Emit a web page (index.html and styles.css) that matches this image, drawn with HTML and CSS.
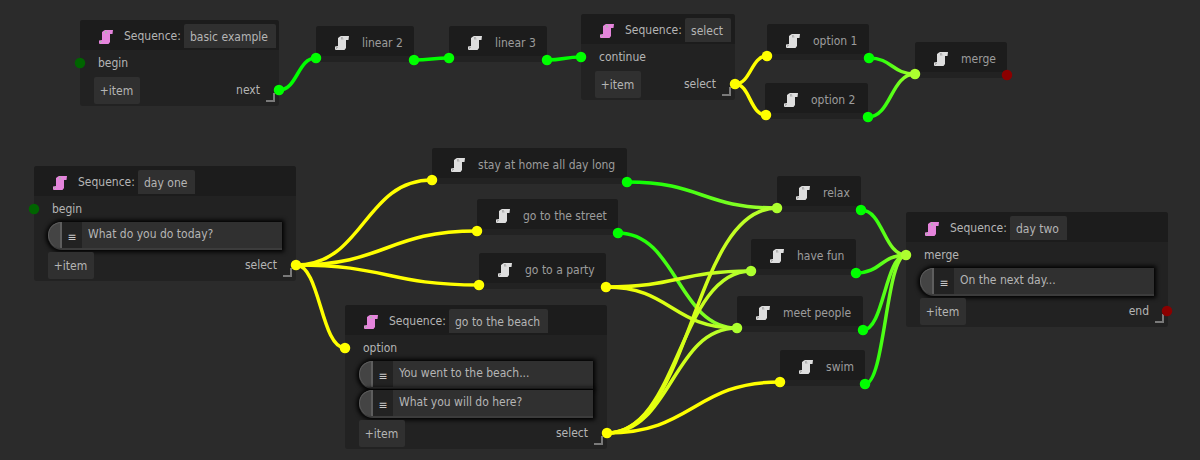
FILE: index.html
```html
<!DOCTYPE html>
<html lang="en">
<head>
<meta charset="utf-8">
<title>Sequence graph</title>
<link rel="stylesheet" href="styles.css">
</head>
<body>
<svg width="0" height="0" class="defs">
  <defs>
    <symbol id="scroll" viewBox="0 0 14 14">
      <path d="M5 0.500 L6 0 H14 L13.500 4 H11 V12 L9.500 14 H0.500 L0 13 V10.500 L3 10 V2 Z"/>
      <path class="fold" d="M1 11 H3 V12 H2 V13 H1 Z M6 1 H8 L7.500 2.500 H8.500 V3.500 H6 Z"/>
    </symbol>
    <linearGradient id="ggy"><stop offset="0" stop-color="#00ff00"/><stop offset="1" stop-color="#adff2f"/></linearGradient>
    <linearGradient id="ygy"><stop offset="0" stop-color="#ffff00"/><stop offset="1" stop-color="#adff2f"/></linearGradient>
  </defs>
</svg>
<main class="canvas">

  <section class="node seq at-basic">
    <header class="head"><svg class="icon pink"><use href="#scroll"/></svg><span class="label">Sequence:</span><span class="field">basic example</span></header>
    <div class="row">begin</div>
    <div class="foot"><button class="add">+item</button><span class="out">next</span></div>
    <i class="grip"></i>
  </section>
  <section class="node plain at-linear2"><header class="head"><svg class="icon"><use href="#scroll"/></svg><span class="title">linear 2</span></header></section>
  <section class="node plain at-linear3"><header class="head"><svg class="icon"><use href="#scroll"/></svg><span class="title">linear 3</span></header></section>
  <section class="node seq at-select">
    <header class="head"><svg class="icon pink"><use href="#scroll"/></svg><span class="label">Sequence:</span><span class="field">select</span></header>
    <div class="row">continue</div>
    <div class="foot"><button class="add">+item</button><span class="out">select</span></div>
    <i class="grip"></i>
  </section>
  <section class="node plain at-option1"><header class="head"><svg class="icon"><use href="#scroll"/></svg><span class="title">option 1</span></header></section>
  <section class="node plain at-option2"><header class="head"><svg class="icon"><use href="#scroll"/></svg><span class="title">option 2</span></header></section>
  <section class="node plain at-merge"><header class="head"><svg class="icon"><use href="#scroll"/></svg><span class="title">merge</span></header></section>

  <section class="node seq at-dayone">
    <header class="head"><svg class="icon pink"><use href="#scroll"/></svg><span class="label">Sequence:</span><span class="field">day one</span></header>
    <div class="row">begin</div>
    <div class="item"><span class="knob"></span><span class="handle">≡</span><span class="text">What do you do today?</span></div>
    <div class="foot"><button class="add">+item</button><span class="out">select</span></div>
    <i class="grip"></i>
  </section>
  <section class="node plain at-home"><header class="head"><svg class="icon"><use href="#scroll"/></svg><span class="title">stay at home all day long</span></header></section>
  <section class="node plain at-street"><header class="head"><svg class="icon"><use href="#scroll"/></svg><span class="title">go to the street</span></header></section>
  <section class="node plain at-party"><header class="head"><svg class="icon"><use href="#scroll"/></svg><span class="title">go to a party</span></header></section>
  <section class="node seq at-beach">
    <header class="head"><svg class="icon pink"><use href="#scroll"/></svg><span class="label">Sequence:</span><span class="field">go to the beach</span></header>
    <div class="row">option</div>
    <div class="item"><span class="knob"></span><span class="handle">≡</span><span class="text">You went to the beach...</span></div>
    <div class="item"><span class="knob"></span><span class="handle">≡</span><span class="text">What you will do here?</span></div>
    <div class="foot"><button class="add">+item</button><span class="out">select</span></div>
    <i class="grip"></i>
  </section>
  <section class="node plain at-relax"><header class="head"><svg class="icon"><use href="#scroll"/></svg><span class="title">relax</span></header></section>
  <section class="node plain at-fun"><header class="head"><svg class="icon"><use href="#scroll"/></svg><span class="title">have fun</span></header></section>
  <section class="node plain at-meet"><header class="head"><svg class="icon"><use href="#scroll"/></svg><span class="title">meet people</span></header></section>
  <section class="node plain at-swim"><header class="head"><svg class="icon"><use href="#scroll"/></svg><span class="title">swim</span></header></section>
  <section class="node seq at-daytwo">
    <header class="head"><svg class="icon pink"><use href="#scroll"/></svg><span class="label">Sequence:</span><span class="field">day two</span></header>
    <div class="row">merge</div>
    <div class="item"><span class="knob"></span><span class="handle">≡</span><span class="text">On the next day...</span></div>
    <div class="foot"><button class="add">+item</button><span class="out">end</span></div>
    <i class="grip"></i>
  </section>

  <svg class="wires" width="1200" height="460" viewBox="0 0 1200 460" fill="none" stroke-width="3.5" stroke-linecap="round">
    <g stroke="#00ff00">
      <path d="M279 90 C297.500 90 297.500 58 316 58"/>
      <path d="M414 60 C431 60 432 58 449 58"/>
      <path d="M547 60 C564 60 564 57 581 57"/>
    </g>
    <g stroke="#ffff00">
      <path d="M735 84 C751 84 751 56 767 56"/>
      <path d="M735 84 C750 84 750 115 766 115"/>
      <path d="M296 265 C364 265 364 180 432 180"/>
      <path d="M296 265 C386 265 387 231 477 231"/>
      <path d="M296 265 C387 265 388 285 479 285"/>
      <path d="M296 265 C320 265 321 348 345 348"/>
      <path d="M607 433 C693 433 694 382 780 382"/>
    </g>
    <g stroke="url(#ggy)">
      <path d="M869 58 C892 58 892 74 915 74"/>
      <path d="M868 117 C891 117 891 74 915 74"/>
      <path d="M627 182 C702 182 702 208 777 208"/>
      <path d="M618 233 C677 233 678 328 737 328"/>
      <path d="M861 210 C883 210 884 255 906 255"/>
      <path d="M856 273 C881 273 881 255 906 255"/>
      <path d="M863 330 C884 330 885 255 906 255"/>
      <path d="M865 384 C885 384 886 255 906 255"/>
    </g>
    <g stroke="url(#ygy)">
      <path d="M606 287 C678 287 679 271 751 271"/>
      <path d="M606 287 C671 287 672 328 737 328"/>
      <path d="M607 433 C692 433 692 208 777 208"/>
      <path d="M607 433 C679 433 679 271 751 271"/>
      <path d="M607 433 C672 433 672 328 737 328"/>
    </g>
    <g class="ports" stroke="none">
      <g fill="#006400">
        <circle cx="80" cy="63" r="5.250"/>
        <circle cx="34" cy="209" r="5.250"/>
      </g>
      <g fill="#8b0000">
        <circle cx="1007" cy="75" r="5.250"/>
        <circle cx="1167" cy="311" r="5.250"/>
      </g>
      <g fill="#00ff00">
        <circle cx="279" cy="90" r="5.250"/>
        <circle cx="316" cy="58" r="5.250"/>
        <circle cx="414" cy="60" r="5.250"/>
        <circle cx="449" cy="58" r="5.250"/>
        <circle cx="547" cy="60" r="5.250"/>
        <circle cx="581" cy="57" r="5.250"/>
        <circle cx="869" cy="58" r="5.250"/>
        <circle cx="868" cy="117" r="5.250"/>
        <circle cx="627" cy="182" r="5.250"/>
        <circle cx="618" cy="233" r="5.250"/>
        <circle cx="861" cy="210" r="5.250"/>
        <circle cx="856" cy="273" r="5.250"/>
        <circle cx="863" cy="330" r="5.250"/>
        <circle cx="865" cy="384" r="5.250"/>
      </g>
      <g fill="#ffff00">
        <circle cx="735" cy="84" r="5.250"/>
        <circle cx="767" cy="56" r="5.250"/>
        <circle cx="766" cy="115" r="5.250"/>
        <circle cx="296" cy="265" r="5.250"/>
        <circle cx="432" cy="180" r="5.250"/>
        <circle cx="477" cy="231" r="5.250"/>
        <circle cx="479" cy="285" r="5.250"/>
        <circle cx="345" cy="348" r="5.250"/>
        <circle cx="606" cy="287" r="5.250"/>
        <circle cx="607" cy="433" r="5.250"/>
        <circle cx="780" cy="382" r="5.250"/>
      </g>
      <g fill="#adff2f">
        <circle cx="915" cy="74" r="5.250"/>
        <circle cx="777" cy="208" r="5.250"/>
        <circle cx="751" cy="271" r="5.250"/>
        <circle cx="737" cy="328" r="5.250"/>
        <circle cx="906" cy="255" r="5.250"/>
      </g>
    </g>
  </svg>
</main>
</body>
</html>
```

FILE: styles.css
```css
html, body {
  margin: 0;
  padding: 0;
  background: #2b2b2b;
}

.defs {
  position: absolute;
}

.canvas {
  position: relative;
  width: 1200px;
  height: 460px;
  overflow: hidden;
  background: #2b2b2b;
  font-family: "DejaVu Sans", sans-serif;
  font-stretch: condensed;
  font-size: 12px;
  line-height: 16px;
  color: #b5b5b5;
}

.wires {
  position: absolute;
  left: 0;
  top: 0;
}

/* nodes sit on a free canvas */
.node {
  position: absolute;
  display: flex;
  flex-direction: column;
  background: #222222;
  border-radius: 3px;
}

.plain { height: 36px; }

.at-basic   { left: 80px;  top: 20px;  width: 199px; }
.at-linear2 { left: 316px; top: 26px;  width: 98px; }
.at-linear3 { left: 449px; top: 26px;  width: 98px; }
.at-select  { left: 581px; top: 14px;  width: 154px; }
.at-option1 { left: 767px; top: 24px;  width: 102px; }
.at-option2 { left: 765px; top: 83px;  width: 103px; }
.at-merge   { left: 915px; top: 42px;  width: 92px; }
.at-dayone  { left: 34px;  top: 166px; width: 262px; }
.at-home    { left: 432px; top: 148px; width: 195px; }
.at-street  { left: 477px; top: 199px; width: 141px; }
.at-party   { left: 479px; top: 253px; width: 127px; }
.at-beach   { left: 345px; top: 305px; width: 262px; }
.at-relax   { left: 777px; top: 176px; width: 84px; }
.at-fun     { left: 751px; top: 239px; width: 105px; }
.at-meet    { left: 737px; top: 296px; width: 126px; }
.at-swim    { left: 780px; top: 350px; width: 85px; }
.at-daytwo  { left: 906px; top: 212px; width: 262px; }

.head {
  display: flex;
  align-items: center;
  height: 30px;
  flex: none;
  padding-left: 19px;
  background: #1c1c1c;
  border-radius: 3px 3px 0 0;
}

.icon {
  flex: none;
  width: 14px;
  height: 14px;
  margin-top: 4px;
  fill: #dedede;
}

.fold {
  fill: #b0b0b0;
}

.pink {
  fill: #e584dc;
}

.pink .fold {
  fill: #e584dc;
}

.label {
  margin-left: 11px;
  margin-right: 3px;
  margin-top: 2px;
  width: 57px;
  white-space: nowrap;
}

.title {
  margin-left: 13px;
  margin-top: 4px;
  color: #9c9c9c;
  white-space: nowrap;
}

.field {
  height: 24px;
  line-height: 27px;
  margin-top: 2px;
  padding: 0 8px 0 6px;
  background: #303030;
  border-radius: 2px 2px 0 0;
  white-space: nowrap;
}

.row {
  height: 26px;
  line-height: 26px;
  padding-left: 18px;
}

.item {
  display: flex;
  height: 26px;
  margin: 0 14px 1px 14px;
  border-bottom: 2px solid #3c3c3c;
  background: #222222;
  border-radius: 14px 0 0 14px;
  box-shadow: 0 0 4px 2px #000000;
}

.knob {
  flex: none;
  box-sizing: border-box;
  width: 14px;
  background: #444444;
  border: 1px solid #5e5e5e;
  border-right-width: 2px;
  border-bottom: 0;
  border-radius: 14px 0 0 14px;
}

.handle {
  flex: none;
  width: 20px;
  text-align: center;
  line-height: 31px;
  color: #c8c8c8;
}

.text {
  flex: 1;
  height: 26px;
  line-height: 24px;
  padding-left: 6px;
  background: #303030;
  white-space: nowrap;
}

.foot {
  display: flex;
  align-items: center;
  justify-content: space-between;
  height: 27px;
  margin: 1px 19px 2px 14px;
}

.add {
  height: 27px;
  width: 46px;
  padding: 0 1px 0 0;
  border: 0;
  border-radius: 2px;
  background: #303030;
  color: #b5b5b5;
  font: inherit;
}

.out {
  margin-top: -2px;
}

.grip {
  position: absolute;
  right: 4px;
  bottom: 4px;
  width: 7px;
  height: 7px;
  border-right: 2px solid #7a7a7a;
  border-bottom: 2px solid #7a7a7a;
}
```
